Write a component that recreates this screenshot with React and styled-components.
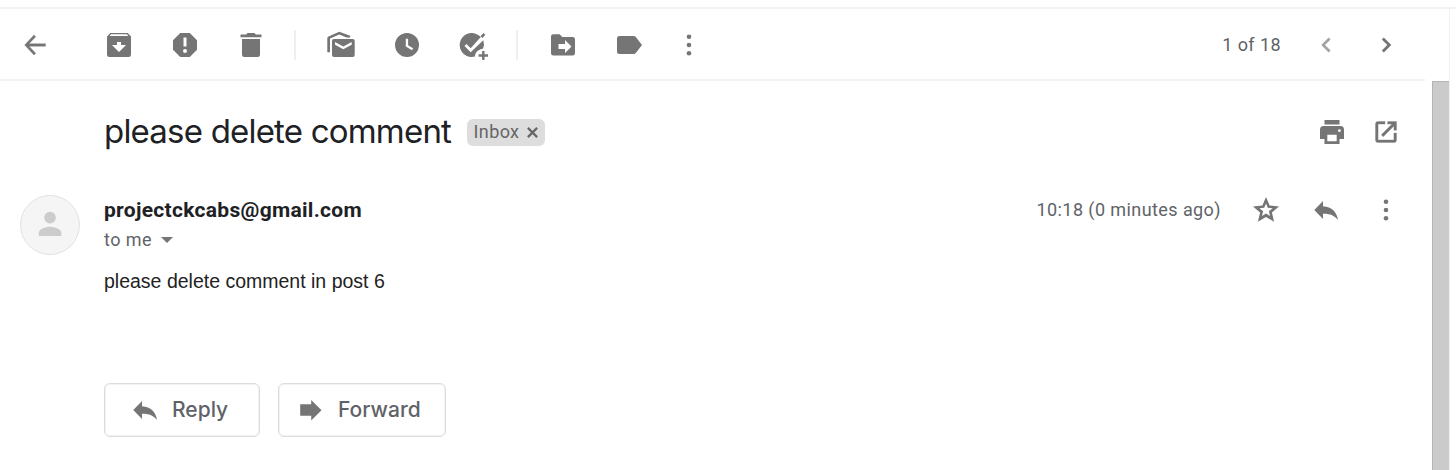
import React from 'react';
import styled, { createGlobalStyle } from 'styled-components';

const GlobalStyle = createGlobalStyle`
  * { box-sizing: border-box; }
  body { margin: 0; background: #fff; overflow: hidden; }
`;

const roboto = `Roboto, "Liberation Sans", sans-serif`;
const display = `Inter, Roboto, sans-serif`;

const Page = styled.div`
  width: 1456px;
  height: 470px;
  padding-top: 7px;
  background: #fff;
  color: #202124;
  font-family: ${roboto};
`;

const Frame = styled.div`
  width: 1450px;
  height: 463px;
  border-right: 1px solid #eff1f4;
  display: flex;
  flex-direction: column;
`;

const TopRule = styled.div`
  width: 1456px;
  height: 2px;
  flex: none;
  background: #f0f2f4;
`;

const Toolbar = styled.div`
  flex: none;
  width: 1425px;
  height: 72px;
  border-bottom: 2px solid #f0f2f4;
  display: flex;
  align-items: center;
  padding: 1px 9px 0 5px;
`;

const IconButton = styled.button`
  flex: none;
  display: flex;
  align-items: center;
  justify-content: center;
  width: ${(p) => p.$width || 60}px;
  height: 60px;
  margin: 0 0 0 ${(p) => p.$gap || 0}px;
  padding: 0;
  border: 0;
  background: none;
  color: ${(p) => (p.$disabled ? '#a3a3a3' : '#757575')};
`;

const Glyph = styled.svg`
  display: block;
  flex: none;
  width: 30px;
  height: 30px;
  overflow: visible;
  fill: currentColor;
`;

const Divider = styled.div`
  width: 2px;
  height: 30px;
  margin: 0 ${(p) => p.$after}px 0 ${(p) => p.$before}px;
  background: #edeff1;
`;

const Spacer = styled.div`
  flex: 1;
`;

const Counter = styled.span`
  font-size: 18px;
  letter-spacing: 0.42px;
  color: #5f6368;
  white-space: nowrap;
`;

const Timestamp = styled(Counter)`
  padding-bottom: 2px;
`;

const Body = styled.div`
  flex: 1;
  min-height: 0;
  display: flex;
  justify-content: space-between;
`;

const Message = styled.main`
  width: 1416px;
  padding: 21px 0 0 20px;
`;

const Scrollbar = styled.div`
  width: 17px;
  background: #cbcbcb;
  border-left: 1px solid #b4b4b4;
  border-top: 1px solid #b4b4b4;
`;

const SubjectRow = styled.div`
  display: flex;
  align-items: center;
  height: 60px;
  padding: 0 3px 0 84px;
`;

const Subject = styled.h1`
  margin: 0;
  padding-bottom: 2px;
  width: 363px;
  font: 400 33px/48px ${display};
  letter-spacing: -0.8px;
  color: #202124;
  white-space: nowrap;
`;

const Chip = styled.span`
  display: flex;
  align-items: center;
  width: 78px;
  height: 27px;
  padding-left: 6.5px;
  border-radius: 6px;
  background: #ddd;
  color: #666;
  font-size: 18px;
  line-height: 26px;
  letter-spacing: 0.4px;
`;

const CloseGlyph = styled.svg`
  width: 11px;
  height: 11px;
  margin-left: 8px;
  fill: none;
  stroke: #666;
  stroke-width: 2;
`;

const SenderRow = styled.div`
  display: flex;
  height: 75px;
  margin-top: 18px;
`;

const Avatar = styled.div`
  width: 60px;
  height: 60px;
  margin: 15px 24px 0 0;
  border: 1px solid #e2e2e2;
  border-radius: 50%;
  background: #f5f5f5;
  color: #ccc;
  display: flex;
  align-items: center;
  justify-content: center;
`;

const Sender = styled.div`
  padding-top: 15px;
`;

const Address = styled.div`
  font-size: 21px;
  line-height: 30px;
  font-weight: 700;
  letter-spacing: 0.3px;
`;

const Recipient = styled.div`
  display: flex;
  align-items: center;
  font-size: 18px;
  line-height: 30px;
  letter-spacing: 0.45px;
  color: #5f6368;
`;

const Caret = styled.span`
  margin-left: 9px;
  border: 6px solid transparent;
  border-top-color: #757575;
  border-bottom: 0;
`;

const Meta = styled.div`
  display: flex;
  align-items: center;
  height: 60px;
`;

const MessageText = styled.p`
  margin: 11px 0 0 84px;
  font: 19.5px/30px "Liberation Sans", Arial, sans-serif;
  color: #222;
`;

const Actions = styled.div`
  display: flex;
  gap: 18px;
  margin: 87px 0 0 84px;
`;

const ActionButton = styled.button`
  display: flex;
  align-items: center;
  gap: 12px;
  width: ${(p) => p.$width}px;
  height: 54px;
  padding: 0 0 0 ${(p) => p.$inset}px;
  border: 1px solid #dadce0;
  border-radius: 6px;
  box-shadow: inset 0 0 0 1px #f1f2f4;
  background: #fff;
  color: #5f6368;
  font: 500 21px/30px ${display};

  svg { color: #757575; }
`;

const paths = {
  back: <path d="M25.5 13.8H9L15.7 6.7 14 5 4.700 15l9.300 10 1.700-1.700L9 16.200h16.500z" stroke="currentColor" strokeWidth=".4" />,
  archive: (
    <path fillRule="evenodd" d="M6.300 3h17.400L27 6.500v18.200a2.300 2.300 0 0 1-2.300 2.300H5.300A2.300 2.300 0 0 1 3 24.700V6.500zM7 4.300L5.700 6h18.600L23 4.300zM13 12v3H8l7 7 7-7h-5v-3z" />
  ),
  spam: (
    <path fillRule="evenodd" d="M10.200 3h9.600L27 10.200v9.600L19.800 27h-9.600L3 19.800v-9.600zM13.500 7.500v9h3v-9zM15 19a2 2 0 1 0 0 4 2 2 0 0 0 0-4z" />
  ),
  trash: (
    <path d="M4.500 4.500h5.700L11.500 3h7l1.300 1.500h5.700v2.800h-21zM6 9h18v15.500a2.500 2.500 0 0 1-2.500 2.500h-13A2.500 2.500 0 0 1 6 24.500z" />
  ),
  unread: (
    <>
      <path fillRule="evenodd" d="M8 9h18.700a2 2 0 0 1 2 2v14a2 2 0 0 1-2 2H8a2 2 0 0 1-2-2V11a2 2 0 0 1 2-2zM9 12v2.700l8.300 4.600 8.400-4.600V12l-8.400 4.600z" />
      <path d="M1.300 22.300V8.500q0-1.300 1.200-2L13.300 1.700l10.900 4v1.700h-3.700l-7.200-3L4 8.500v13.800z" />
    </>
  ),
  clock: (
    <path fillRule="evenodd" d="M15 3a12 12 0 1 0 0 24 12 12 0 0 0 0-24zM13.800 8.700h2.300v6.600l5 3-1.100 2-6.200-3.800z" />
  ),
  task: (
    <>
      <path d="M20.300 5A12 12 0 1 0 17 26.500c0-4 3-7 8-7.700a12 12 0 0 0 .3-8.500L12.700 22.300l-6.200-6.200L8.400 14l4.300 4.300L22.800 7.100z" />
      <path d="M25.400 3l2 1.700-3 3.300-1.900-1.800zM24.100 21h2.400v3.300H30v2.400h-3.500V30h-2.400v-3.300h-3.500v-2.400h3.500z" />
    </>
  ),
  move: (
    <path fillRule="evenodd" d="M5.300 4.200h6.400l2.500 2.800h10.500A2.300 2.300 0 0 1 27 9.300v14a2.300 2.300 0 0 1-2.300 2.300H5.300A2.300 2.300 0 0 1 3 23.300V6.500a2.300 2.300 0 0 1 2.300-2.300zM17 10v4h-6.500v5H17v4l6.500-6.500z" />
  ),
  label: <path d="M5.500 6h14.300q1.300 0 2 1L28 15l-6.200 8q-.7 1-2 1H5.500A2.500 2.500 0 0 1 3 21.500v-13A2.500 2.500 0 0 1 5.500 6z" />,
  more: (
    <>
      <circle cx="15" cy="6.700" r="2.300" />
      <circle cx="15" cy="15" r="2.300" />
      <circle cx="15" cy="23.300" r="2.300" />
    </>
  ),
  prev: <path d="M17.600 7.500l2 2L14 15l5.600 5.500-2 2L10.300 15z" />,
  next: <path d="M12.800 7.500l-2 2L16.300 15l-5.500 5.500 2 2L20.300 15z" />,
  print: (
    <path fillRule="evenodd" d="M7.500 3h15v4.500h-15zM6.500 9h17A3.500 3.500 0 0 1 27 12.500V22h-4.500v5h-15v-5H3v-9.500A3.500 3.500 0 0 1 6.500 9zM10.300 17.800v6.500h9.400v-6.500zM22.400 12.300a1.400 1.400 0 1 0 0 2.800 1.400 1.400 0 0 0 0-2.800z" />
  ),
  open: (
    <path stroke="currentColor" strokeWidth=".3" d="M14 4.500v2.600H7.100v15.800h15.800V16h2.600v7.200a2.300 2.300 0 0 1-2.300 2.300H6.800a2.300 2.300 0 0 1-2.300-2.300V6.800a2.300 2.300 0 0 1 2.300-2.300zM16.700 4.500h8.800v8.800h-2.600V9L12.200 19.700l-1.900-1.900L21 7.100h-4.300z" />
  ),
  star: (
    <path fillRule="evenodd" d="M15 2l3.600 8.500 9.400.9-7.100 6.100 2.200 9.300L15 22l-8.100 4.800 2.200-9.300L2 11.400l9.400-.9zM15 8.400l-1.800 4.400-4.800.4 3.700 3.100-1.100 4.700 4-2.500 4 2.500-1.100-4.700 3.700-3.100-4.800-.4z" />
  ),
  reply: <path d="M12 6v5.300c9 .7 13.700 5.700 15 13.700-3.500-4.500-8-6.500-15-6.300V24L3.300 15z" />,
  forward: <path d="M4.200 9.200h11V5L25.500 15.200 15.200 25.400v-4.600h-11z" />,
  person: (
    <>
      <circle cx="15" cy="7.600" r="5.800" />
      <path d="M3.800 26v-3.300c0-3.700 7-6 11.200-6s11.300 2.300 11.300 6V26z" />
    </>
  ),
};

const Icon = ({ name }) => <Glyph viewBox="0 0 30 30">{paths[name]}</Glyph>;

const Tool = ({ name, ...rest }) => (
  <IconButton aria-label={name} {...rest}>
    <Icon name={name} />
  </IconButton>
);

export default function App() {
  return (
    <Page>
      <GlobalStyle />
      <Frame>
        <TopRule />
        <Toolbar>
          <Tool name="back" />
          <Tool name="archive" $gap={24} />
          <Tool name="spam" $gap={6} />
          <Tool name="trash" $gap={6} />
          <Divider $before={13} $after={15} />
          <Tool name="unread" />
          <Tool name="clock" $gap={6} />
          <Tool name="task" $gap={6} />
          <Divider $before={13} $after={15} />
          <Tool name="move" />
          <Tool name="label" $gap={6} />
          <Tool name="more" />
          <Spacer />
          <Counter>1 of 18</Counter>
          <Tool name="prev" $gap={15} $disabled />
          <Tool name="next" />
        </Toolbar>
        <Body>
          <Message>
            <SubjectRow>
              <Subject>please delete comment</Subject>
              <Chip>
                Inbox
                <CloseGlyph viewBox="0 0 10 10">
                  <path d="M.8.8l8.400 8.400M9.200.8L.8 9.200" />
                </CloseGlyph>
              </Chip>
              <Spacer />
              <Tool name="print" $width={54} />
              <Tool name="open" $width={54} />
            </SubjectRow>
            <SenderRow>
              <Avatar><Icon name="person" /></Avatar>
              <Sender>
                <Address>projectckcabs@gmail.com</Address>
                <Recipient>to me<Caret /></Recipient>
              </Sender>
              <Spacer />
              <Meta>
                <Timestamp>10:18 (0 minutes ago)</Timestamp>
                <Tool name="star" $gap={15} />
                <Tool name="reply" />
                <Tool name="more" />
              </Meta>
            </SenderRow>
            <MessageText>please delete comment in post 6</MessageText>
            <Actions>
              <ActionButton $width={156} $inset={25}><Icon name="reply" />Reply</ActionButton>
              <ActionButton $width={168} $inset={17}><Icon name="forward" />Forward</ActionButton>
            </Actions>
          </Message>
          <Scrollbar />
        </Body>
      </Frame>
    </Page>
  );
}
